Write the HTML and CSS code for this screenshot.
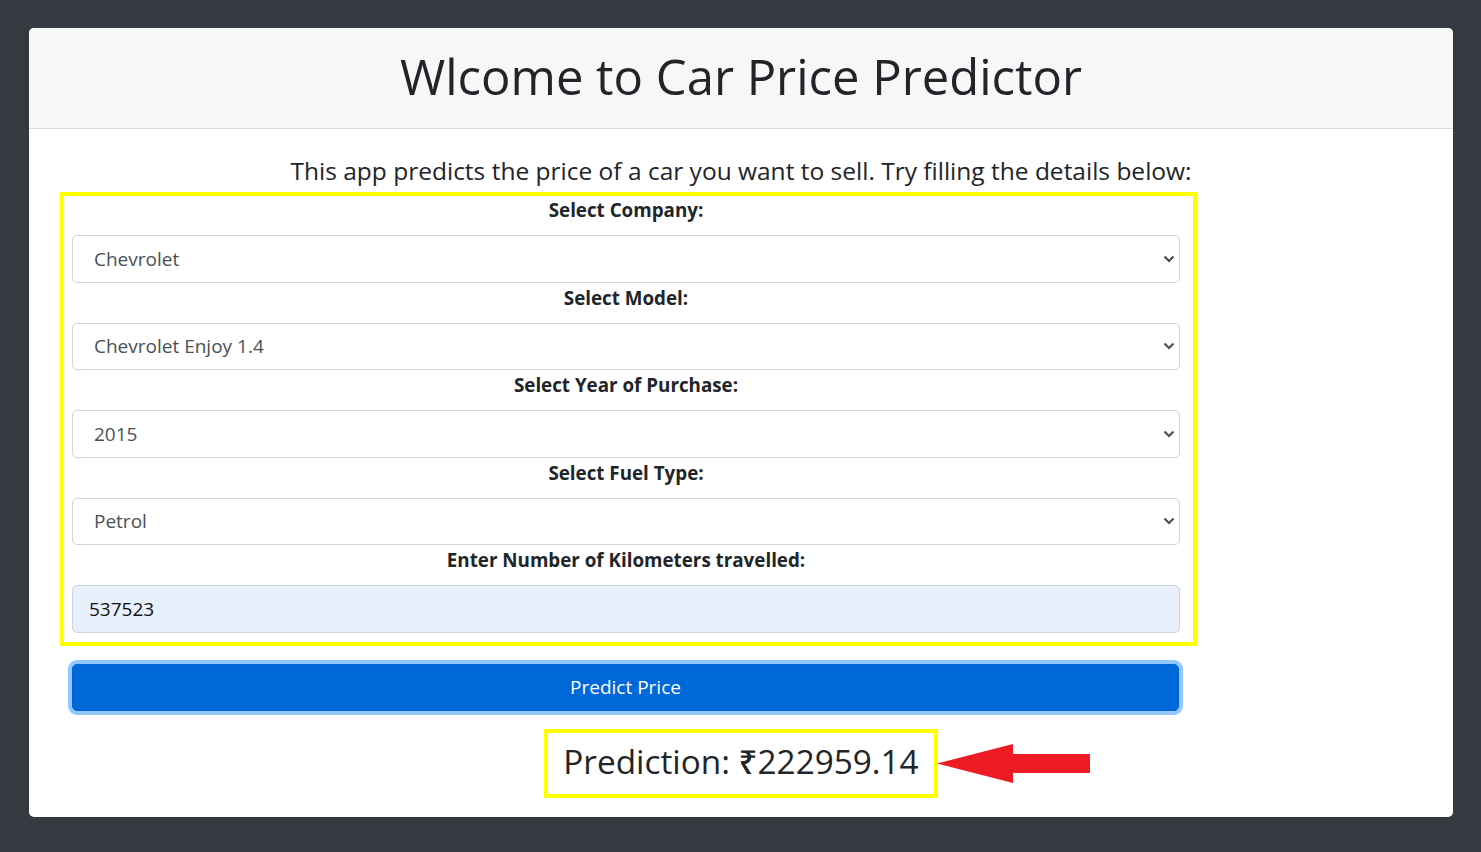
FILE: index.html
```html
<!DOCTYPE html>
<html lang="en">
<head>
<meta charset="utf-8">
<title>Car Price Predictor</title>
<link rel="stylesheet" href="styles.css">
</head>
<body>
<div class="card">
  <div class="card-header">
    <h1 class="title">Wlcome to Car Price Predictor</h1>
  </div>
  <div class="card-body">
    <h5 class="subtitle">This app predicts the price of a car you want to sell. Try filling the details below:</h5>
    <form class="form-box">
      <div class="group">
        <label class="label">Select Company:</label>
        <div class="select"><span>Chevrolet</span><svg class="chev" width="12" height="8" viewBox="0 0 12 8"><path d="M1.5 1.5 L6 6 L10.5 1.5" fill="none" stroke="#495057" stroke-width="2.2"/></svg></div>
      </div>
      <div class="group">
        <label class="label">Select Model:</label>
        <div class="select"><span>Chevrolet Enjoy 1.4</span><svg class="chev" width="12" height="8" viewBox="0 0 12 8"><path d="M1.5 1.5 L6 6 L10.5 1.5" fill="none" stroke="#495057" stroke-width="2.2"/></svg></div>
      </div>
      <div class="group">
        <label class="label">Select Year of Purchase:</label>
        <div class="select"><span>2015</span><svg class="chev" width="12" height="8" viewBox="0 0 12 8"><path d="M1.5 1.5 L6 6 L10.5 1.5" fill="none" stroke="#495057" stroke-width="2.2"/></svg></div>
      </div>
      <div class="group">
        <label class="label">Select Fuel Type:</label>
        <div class="select"><span>Petrol</span><svg class="chev" width="12" height="8" viewBox="0 0 12 8"><path d="M1.5 1.5 L6 6 L10.5 1.5" fill="none" stroke="#495057" stroke-width="2.2"/></svg></div>
      </div>
      <div class="group">
        <label class="label">Enter Number of Kilometers travelled:</label>
        <div class="input">537523</div>
      </div>
    </form>
    <div class="btn-row">
      <button class="btn" type="button">Predict Price</button>
    </div>
    <div class="result-row">
      <div class="result">
        <h3 class="prediction">Prediction: ₹222959.14</h3>
        <svg class="arrow" width="153" height="39" viewBox="0 0 153 39"><polygon points="0,19.5 76,0 76,10 153,10 153,29 76,29 76,39" fill="#ed1c24"/></svg>
      </div>
    </div>
  </div>
</div>
</body>
</html>
```

FILE: styles.css
```css
html, body {
  margin: 0;
  padding: 0;
}
body {
  background: #343a40;
  font-family: "Open Sans", "Noto Sans", "Liberation Sans", sans-serif;
  color: #212529;
  padding: 28px 28px 35px 29px;
}
.card {
  background: #fff;
  border-radius: 5px;
  overflow: hidden;
  height: 789px;
  box-sizing: border-box;
}
.card-header {
  background: #f7f7f7;
  border-bottom: 1px solid #dcdcdc;
  padding: 18px 25px 12px;
  height: 101px;
  box-sizing: border-box;
}
.title {
  margin: 0;
  text-align: center;
  font-size: 49px;
  font-weight: 500;
  line-height: 60px;
  color: #212529;
}
.card-body {
  padding: 27px 25px 25px 25px;
}
.subtitle {
  margin: 0 0 6px 0;
  text-align: center;
  font-size: 24.5px;
  font-weight: 400;
  line-height: 30px;
  color: #212529;
}
.form-box {
  margin: 0 0 0 6px;
  width: 1137px;
  box-sizing: border-box;
  border: 4px solid #ffff00;
  padding: 0 13px 9px 8px;
  display: flex;
  flex-direction: column;
}
.group {
  display: flex;
  flex-direction: column;
}
.label {
  display: block;
  text-align: center;
  font-weight: 700;
  font-size: 18.8px;
  line-height: 29px;
  margin-bottom: 10px;
  color: #212529;
}
.group + .group .label {
  line-height: 30px;
}
.select, .input {
  height: 47.5px;
  box-sizing: border-box;
  border: 1px solid #ced4da;
  border-radius: 5px;
  display: flex;
  align-items: center;
  font-size: 19px;
  color: #495057;
}
.select {
  padding: 0 4px 0 21px;
  justify-content: space-between;
}
.input {
  padding: 0 16px;
  background: #e8f0fe;
  color: #111;
}
.chev {
  display: block;
}
.btn-row {
  width: 1107px;
  margin-left: 18px;
  margin-top: 18px;
}
.btn {
  display: block;
  width: 100%;
  height: 47.5px;
  background: #0069d9;
  border: 1px solid #0062cc;
  border-radius: 5px;
  color: #fff;
  font-family: inherit;
  font-size: 19px;
  box-shadow: 0 0 0 4px rgba(38, 143, 255, 0.5);
}
.result-row {
  display: flex;
  justify-content: center;
  margin-top: 18px;
}
.result {
  position: relative;
  border: 4px solid #ffff00;
  padding: 5px 15px 10px 15px;
}
.prediction {
  margin: 0;
  font-size: 33.3px;
  font-weight: 500;
  line-height: 46px;
  color: #212529;
}
.arrow {
  position: absolute;
  left: calc(100% + 3px);
  top: 11px;
}
```
